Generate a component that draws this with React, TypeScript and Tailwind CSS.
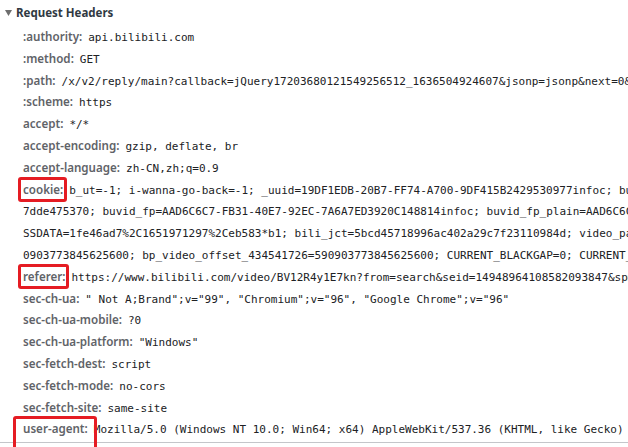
import React from "react";

const LABEL_FONT = { fontFamily: '"Noto Sans", "Open Sans", sans-serif' };
const MONO_FONT = { fontFamily: '"DejaVu Sans Mono", "Liberation Mono", monospace' };

type Row = { name: string; lines: string[]; box?: "small" | "ua" };

const rows: Row[] = [
  { name: ":authority:", lines: ["api.bilibili.com"] },
  { name: ":method:", lines: ["GET"] },
  {
    name: ":path:",
    lines: ["/x/v2/reply/main?callback=jQuery17203680121549256512_1636504924607&jsonp=jsonp&next=0&type=1&oid=434541726&mode=3&plat=1"],
  },
  { name: ":scheme:", lines: ["https"] },
  { name: "accept:", lines: ["*/*"] },
  { name: "accept-encoding:", lines: ["gzip, deflate, br"] },
  { name: "accept-language:", lines: ["zh-CN,zh;q=0.9"] },
  {
    name: "cookie:",
    box: "small",
    lines: [
      "b_ut=-1; i-wanna-go-back=-1; _uuid=19DF1EDB-20B7-FF74-A700-9DF415B2429530977infoc; buvid3=3A8F1D26-B9C4-4E31-A5D0-",
      "7dde475370; buvid_fp=AAD6C6C7-FB31-40E7-92EC-7A6A7ED3920C148814infoc; buvid_fp_plain=AAD6C6C7-FB31-40E7;",
      "SSDATA=1fe46ad7%2C1651971297%2Ceb583*b1; bili_jct=5bcd45718996ac402a29c7f23110984d; video_page_version=",
      "0903773845625600; bp_video_offset_434541726=590903773845625600; CURRENT_BLACKGAP=0; CURRENT_QUALITY=80",
    ],
  },
  {
    name: "referer:",
    box: "small",
    lines: ["https://www.bilibili.com/video/BV12R4y1E7kn?from=search&seid=14948964108582093847&spm_id_from=333.337.0.0"],
  },
  { name: "sec-ch-ua:", lines: ['" Not A;Brand";v="99", "Chromium";v="96", "Google Chrome";v="96"'] },
  { name: "sec-ch-ua-mobile:", lines: ["?0"] },
  { name: "sec-ch-ua-platform:", lines: ['"Windows"'] },
  { name: "sec-fetch-dest:", lines: ["script"] },
  { name: "sec-fetch-mode:", lines: ["no-cors"] },
  { name: "sec-fetch-site:", lines: ["same-site"] },
  {
    name: "user-agent:",
    box: "ua",
    lines: ["Mozilla/5.0 (Windows NT 10.0; Win64; x64) AppleWebKit/537.36 (KHTML, like Gecko) Chrome/96.0.4664.45 Safari/537.36"],
  },
];

function Label({ row }: { row: Row }) {
  return (
    <span
      className="relative mr-[6px] font-semibold text-[11.6px] leading-none text-[#5f6368]"
      style={LABEL_FONT}
    >
      {row.name}
      {row.box === "small" && (
        <span className="pointer-events-none absolute left-[-5px] right-[-4px] top-[-5px] bottom-[-5px] rounded-[3px] border-[3px] border-[#e51c23]" />
      )}
      {row.box === "ua" && (
        <span className="pointer-events-none absolute left-[-10px] right-[-9px] top-[-5px] bottom-[-24px] z-10 rounded-[3px] border-[3px] border-[#e51c23]" />
      )}
    </span>
  );
}

export default function App() {
  return (
    <div className="relative w-[628px] h-[447px] overflow-hidden bg-white">
      <div className="flex h-[25px] items-center pl-[5px]">
        <svg width="7" height="6" viewBox="0 0 7 6" className="mr-[4px]">
          <path d="M0 0 H7 L3.5 6 Z" fill="#6e6e6e" />
        </svg>
        <span className="font-bold text-[11.5px] text-[#303942]" style={LABEL_FONT}>
          Request Headers
        </span>
      </div>
      <div className="pl-[23px] pt-[2px] text-[11px] text-[#202124]" style={MONO_FONT}>
        {rows.map((row) => (
          <div key={row.name} className="whitespace-nowrap leading-[21.8px]">
            <Label row={row} />
            {row.lines.map((line, i) => (
              <React.Fragment key={i}>
                {i > 0 && <br />}
                <span>{line}</span>
              </React.Fragment>
            ))}
          </div>
        ))}
      </div>
      <div className="mt-px h-px bg-[#c4c6ca]" />
    </div>
  );
}
